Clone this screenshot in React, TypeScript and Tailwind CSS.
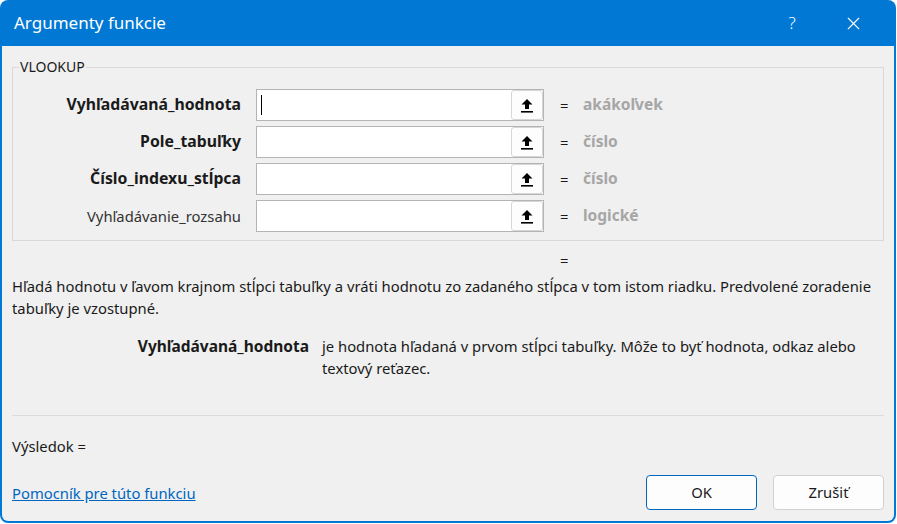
import { X } from 'lucide-react';

const args = [
  { name: 'Vyhľadávaná_hodnota', bold: true, value: 'akákoľvek', cursor: true },
  { name: 'Pole_tabuľky', bold: true, value: 'číslo' },
  { name: 'Číslo_indexu_stĺpca', bold: true, value: 'číslo' },
  { name: 'Vyhľadávanie_rozsahu', bold: false, value: 'logické' },
];

function RefButton() {
  return (
    <div className="w-[32px] h-[30px] bg-[#fdfdfd] border border-[#d6d6d6] rounded-[3px] flex items-center justify-center">
      <svg width="12" height="15" viewBox="0 0 12 15" className="text-black">
        <path d="M6 1 L11.5 6.5 L8 6.5 L8 11 L4 11 L4 6.5 L0.5 6.5 Z" fill="currentColor" />
        <rect x="0" y="13" width="12" height="1.6" fill="currentColor" />
      </svg>
    </div>
  );
}

export default function App() {
  return (
    <div className="w-[897px] h-[524px] bg-white font-['Noto_Sans','Open_Sans',sans-serif] text-[#1a1a1a]">
      <div className="w-[896px] h-[523px] bg-[#0078d4] rounded-lg p-[2px] pt-0 flex flex-col overflow-hidden">
        {/* Title bar */}
        <div className="h-[46px] flex items-center justify-between text-white shrink-0">
          <span className="pl-[12px] text-[17px]">Argumenty funkcie</span>
          <div className="flex items-center">
            <span className="w-[56px] text-center text-[17px] font-light">?</span>
            <span className="w-[74px] flex justify-center pr-[8px]">
              <X className="w-[21px] h-[21px]" strokeWidth={1.3} />
            </span>
          </div>
        </div>

        <div className="flex-1 bg-[#f0f0f0] rounded-b-[6px] px-[10px] flex flex-col text-[14.8px]">
          {/* Group box */}
          <div className="relative mt-[21px] border border-[#d9d9d9] h-[174px] pt-[21px]">
            <span className="absolute left-[6px] -top-[11px] bg-[#f0f0f0] px-[1px] text-[14px] leading-[20px]">
              VLOOKUP
            </span>
            <div className="flex flex-col gap-[5px]">
              {args.map((a) => (
                <div key={a.name} className="flex items-center h-[32px]">
                  <div
                    className={`w-[230px] text-right pr-[2px] ${a.bold ? 'font-bold text-[15.8px]' : 'text-[#333]'}`}
                  >
                    {a.name}
                  </div>
                  <div className="ml-[13px] w-[288px] h-[32px] bg-white border border-[#b4b4b4] flex items-center justify-between">
                    <div className="pl-[4px]">
                      {a.cursor && <div className="w-[1px] h-[20px] bg-black" />}
                    </div>
                    <RefButton />
                  </div>
                  <span className="ml-[16px] w-[23px]">=</span>
                  <span className="font-bold text-[#a6a6a6] text-[15.5px]">{a.value}</span>
                </div>
              ))}
            </div>
          </div>

          <div className="pl-[548px] h-[20px] leading-[20px] mt-[9px]">=</div>

          <p className="leading-[22px] mt-[5px] pr-[10px]">
            Hľadá hodnotu v ľavom krajnom stĺpci tabuľky a vráti hodnotu zo zadaného stĺpca v tom istom riadku. Predvolené zoradenie tabuľky je vzostupné.
          </p>

          <div className="flex mt-[16px]">
            <div className="w-[297px] text-right font-bold text-[15.5px] leading-[22px] shrink-0">Vyhľadávaná_hodnota</div>
            <p className="ml-[13px] leading-[22px] w-[540px]">
              je hodnota hľadaná v prvom stĺpci tabuľky. Môže to byť hodnota, odkaz alebo textový reťazec.
            </p>
          </div>

          <div className="mt-[36px] border-t border-[#dcdcdc]" />

          <div className="mt-[19px] leading-[22px]">Výsledok =</div>

          <div className="mt-[18px] flex items-center justify-between">
            <a className="text-[#0067c0] underline leading-[22px] mt-[0px]">Pomocník pre túto funkciu</a>
            <div className="flex gap-[16px]">
              <button className="w-[111px] h-[35px] bg-[#fdfdfd] border border-[#0067c0] rounded-[4px]">OK</button>
              <button className="w-[111px] h-[35px] bg-[#fdfdfd] border border-[#d0d0d0] rounded-[4px]">Zrušiť</button>
            </div>
          </div>
        </div>
      </div>
    </div>
  );
}
